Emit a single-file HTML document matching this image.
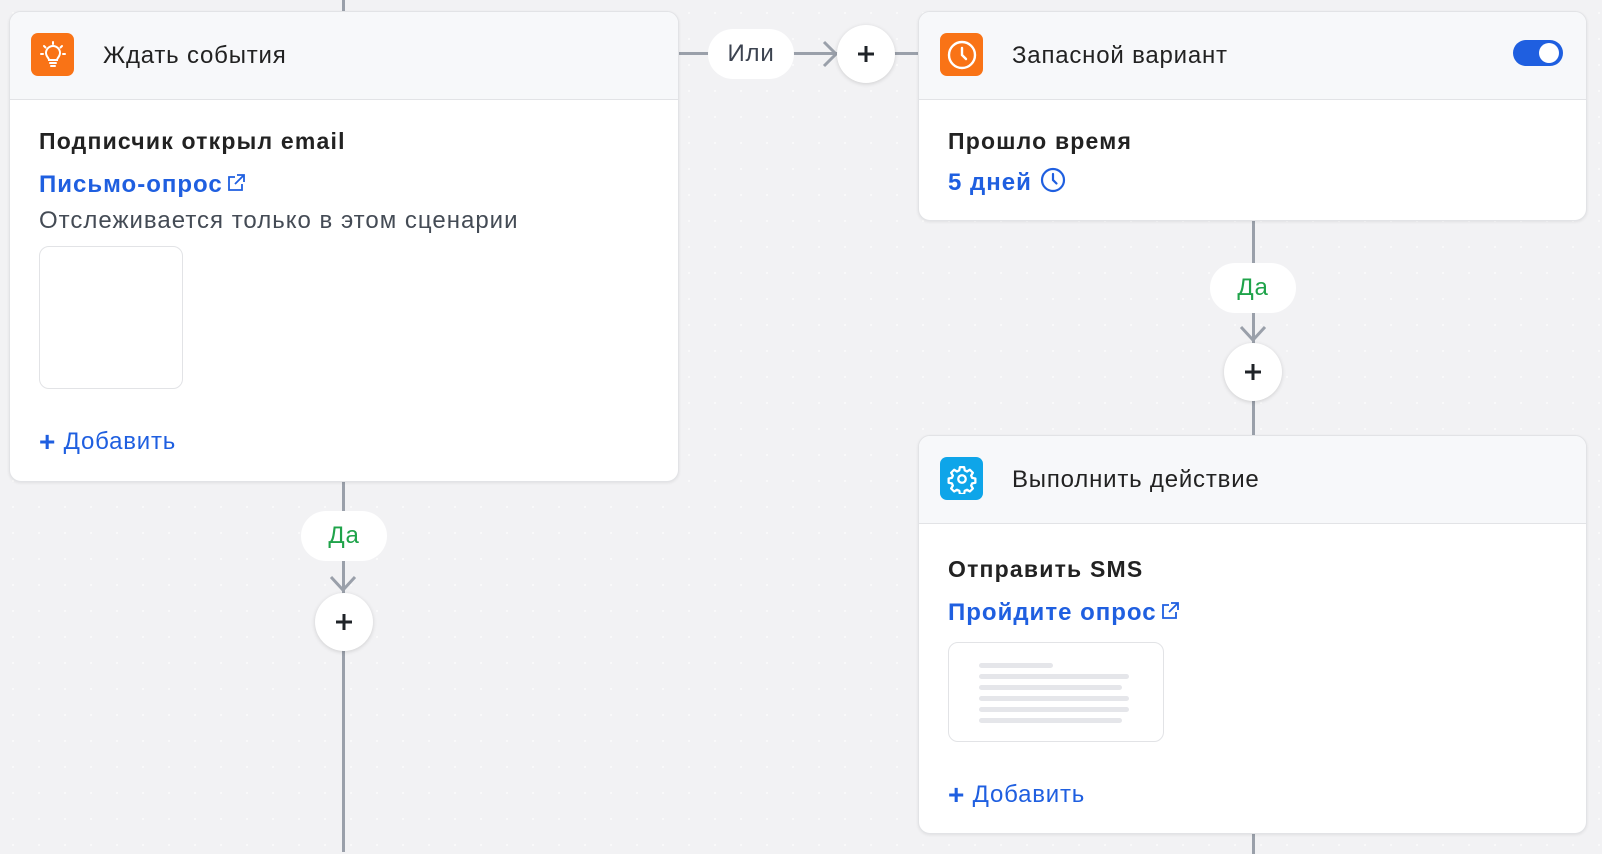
<!DOCTYPE html>
<html><head><meta charset="utf-8"><style>
*{box-sizing:border-box;margin:0;padding:0}
body{width:1602px;height:850px;overflow:hidden;background:#f2f2f4;background-image:radial-gradient(#fafafa 1px,transparent 1.2px);background-size:26px 26px;font-family:"Liberation Sans",sans-serif;position:relative;color:#1f2328}
.abs{position:absolute}
.card{position:absolute;background:#fff;border:1px solid #e2e3e6;border-radius:12px;box-shadow:0 1px 3px rgba(0,0,0,.08);overflow:hidden}
.hdr{position:absolute;left:0;right:0;top:0;height:88px;background:#f7f8fa;border-bottom:1px solid #e2e3e6}
.icon{position:absolute;left:21px;top:21px;width:43px;height:43px;border-radius:7px;display:flex;align-items:center;justify-content:center}
.htitle{position:absolute;left:93px;top:30px;font-size:24px;letter-spacing:0.8px;color:#222}
.b{font-weight:bold;font-size:23px;letter-spacing:1.2px;color:#222;position:absolute}
.lnk{color:#1f5fe0;font-weight:bold;font-size:24px;letter-spacing:1px;position:absolute}
.vl{position:absolute;width:3px;background:#9aa0aa}
.hl{position:absolute;height:3px;background:#9aa0aa}
.pill{position:absolute;background:#fff;border-radius:25px;display:flex;align-items:center;justify-content:center;font-size:24px;letter-spacing:0.8px}
.circ{position:absolute;width:58px;height:58px;border-radius:50%;background:#fff;box-shadow:0 1px 4px rgba(0,0,0,.15);display:flex;align-items:center;justify-content:center}
.add{position:absolute;color:#1f5fe0;font-size:24px;letter-spacing:0.8px}
</style></head><body>
<div class="vl" style="left:342px;top:0;height:12px"></div>
<div class="vl" style="left:342px;top:482px;height:370px"></div>
<div class="hl" style="left:679px;top:52px;width:240px"></div>
<div class="vl" style="left:1252px;top:221px;height:215px"></div>
<div class="vl" style="left:1252px;top:834px;height:20px"></div>
<svg class="abs" style="left:780px;top:40px" width="60" height="28"><path d="M44 2 L56 14 L44 26" fill="none" stroke="#9aa0aa" stroke-width="3"/></svg>
<svg class="abs" style="left:328px;top:570px" width="30" height="24"><path d="M3 7 L15 20 L27 7" fill="none" stroke="#9aa0aa" stroke-width="3"/></svg>
<svg class="abs" style="left:1238px;top:320px" width="30" height="24"><path d="M3 7 L15 20 L27 7" fill="none" stroke="#9aa0aa" stroke-width="3"/></svg>

<div class="pill" style="left:708px;top:29px;width:86px;height:50px;color:#3c4350">Или</div>
<div class="circ" style="left:837px;top:25px"><svg width="20" height="20"><path d="M10 2V18M2 10H18" stroke="#1f2328" stroke-width="3"/></svg></div>
<div class="pill" style="left:301px;top:511px;width:86px;height:50px;color:#1fa34a">Да</div>
<div class="circ" style="left:315px;top:593px"><svg width="20" height="20"><path d="M10 2V18M2 10H18" stroke="#1f2328" stroke-width="3"/></svg></div>
<div class="pill" style="left:1210px;top:263px;width:86px;height:50px;color:#1fa34a">Да</div>
<div class="circ" style="left:1224px;top:343px"><svg width="20" height="20"><path d="M10 2V18M2 10H18" stroke="#1f2328" stroke-width="3"/></svg></div>

<div class="card" style="left:9px;top:11px;width:670px;height:471px">
 <div class="hdr"></div>
 <div class="icon" style="background:#f97316"><svg width="30" height="30" viewBox="0 0 30 30" fill="none" stroke="#fff" stroke-width="2" stroke-linecap="round"><path d="M15 2v2M6 6l1.5 1.5M24 6l-1.5 1.5M3 14h2M25 14h2"/><path d="M11 20c0-2-3-3.5-3-7a7 7 0 0 1 14 0c0 3.5-3 5-3 7z"/><path d="M12 23h6M13 26h4"/></svg></div>
 <div class="htitle">Ждать события</div>
 <div class="b" style="left:29px;top:116px">Подписчик открыл email</div>
 <div class="lnk" style="left:29px;top:159px">Письмо-опрос<svg style="margin-left:3px;vertical-align:-1px" width="20" height="20" viewBox="0 0 20 20" fill="none" stroke="#1f5fe0" stroke-width="1.8"><path d="M9 4H3v13h13v-6M11 2h7v7M18 2L9 11"/></svg></div>
 <div class="abs" style="left:29px;top:195px;font-size:24px;letter-spacing:1px;color:#444b55">Отслеживается только в этом сценарии</div>
 <div class="abs" style="left:29px;top:234px;width:144px;height:143px;border:1px solid #e2e3e6;border-radius:10px"></div>
 <div class="add" style="left:29px;top:414px"><b style="font-size:28px;vertical-align:-2px">+</b> Добавить</div>
</div>

<div class="card" style="left:918px;top:11px;width:669px;height:210px">
 <div class="hdr"></div>
 <div class="icon" style="background:#f97316"><svg width="32" height="32" viewBox="0 0 32 32" fill="none" stroke="#fff" stroke-width="2.4" stroke-linecap="round"><circle cx="16" cy="16" r="13"/><path d="M16 9v7l4 4"/></svg></div>
 <div class="htitle">Запасной вариант</div>
 <div class="abs" style="left:594px;top:28px;width:50px;height:26px;border-radius:13px;background:#1f5fe0"><div class="abs" style="right:4px;top:3px;width:20px;height:20px;border-radius:50%;background:#fff"></div></div>
 <div class="b" style="left:29px;top:116px">Прошло время</div>
 <div class="lnk" style="left:29px;top:155px">5 дней<svg style="margin-left:8px;vertical-align:-3px" width="26" height="26" viewBox="0 0 26 26" fill="none" stroke="#1f5fe0" stroke-width="2.2" stroke-linecap="round"><circle cx="13" cy="13" r="11"/><path d="M13 7v6l3.5 3.5"/></svg></div>
</div>

<div class="card" style="left:918px;top:435px;width:669px;height:399px">
 <div class="hdr"></div>
 <div class="icon" style="background:#0ea5e9"><svg width="30" height="30" viewBox="0 0 24 24" fill="none" stroke="#fff" stroke-width="1.8" stroke-linejoin="round"><path d="M10.3 2.5h3.4l.5 2.6 1.8.9 2.3-1.4 2.4 2.4-1.4 2.3.8 1.8 2.6.5v3.4l-2.6.5-.8 1.8 1.4 2.3-2.4 2.4-2.3-1.4-1.8.8-.5 2.6h-3.4l-.5-2.6-1.8-.8-2.3 1.4-2.4-2.4 1.4-2.3-.8-1.8-2.6-.5v-3.4l2.6-.5.8-1.8-1.4-2.3 2.4-2.4 2.3 1.4 1.8-.9z"/><circle cx="12" cy="12" r="3"/></svg></div>
 <div class="htitle">Выполнить действие</div>
 <div class="b" style="left:29px;top:120px">Отправить SMS</div>
 <div class="lnk" style="left:29px;top:163px">Пройдите опрос<svg style="margin-left:3px;vertical-align:-1px" width="20" height="20" viewBox="0 0 20 20" fill="none" stroke="#1f5fe0" stroke-width="1.8"><path d="M9 4H3v13h13v-6M11 2h7v7M18 2L9 11"/></svg></div>
 <div class="abs" style="left:29px;top:206px;width:216px;height:100px;border:1px solid #e2e3e6;border-radius:10px">
  <div class="abs" style="left:30px;top:20px;width:74px;height:5px;border-radius:3px;background:#e5e6ea"></div>
  <div class="abs" style="left:30px;top:31px;width:150px;height:5px;border-radius:3px;background:#e5e6ea"></div>
  <div class="abs" style="left:30px;top:42px;width:143px;height:5px;border-radius:3px;background:#e5e6ea"></div>
  <div class="abs" style="left:30px;top:53px;width:150px;height:5px;border-radius:3px;background:#e5e6ea"></div>
  <div class="abs" style="left:30px;top:64px;width:150px;height:5px;border-radius:3px;background:#e5e6ea"></div>
  <div class="abs" style="left:30px;top:75px;width:143px;height:5px;border-radius:3px;background:#e5e6ea"></div>
 </div>
 <div class="add" style="left:29px;top:343px"><b style="font-size:28px;vertical-align:-2px">+</b> Добавить</div>
</div>
</body></html>
